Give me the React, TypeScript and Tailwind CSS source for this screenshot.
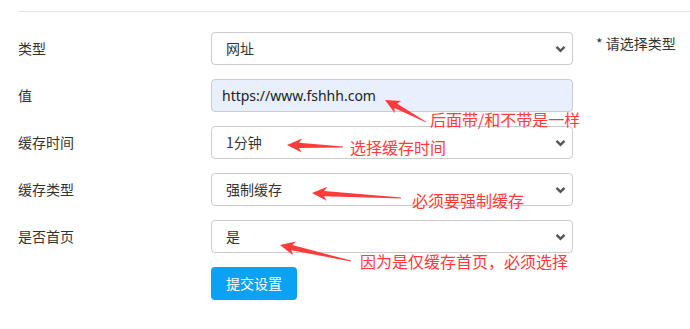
const font = "font-['Microsoft_YaHei','Noto_Sans_CJK_SC',sans-serif]";

type Arrow = { tip: [number, number]; tail: [number, number] };

const arrows: Arrow[] = [
  { tip: [385, 100], tail: [426, 122] },
  { tip: [287, 145], tail: [343, 147] },
  { tip: [312, 193], tail: [401, 198] },
  { tip: [280, 245], tail: [351, 261] },
];

function arrowPoints({ tip, tail }: Arrow) {
  const dx = tail[0] - tip[0];
  const dy = tail[1] - tip[1];
  const len = Math.hypot(dx, dy);
  const ux = dx / len;
  const uy = dy / len;
  const nx = -uy;
  const ny = ux;
  const local: [number, number][] = [
    [0, 0],
    [15, -7],
    [12, -2.6],
    [len, -0.4],
    [len, 0.4],
    [12, 2.6],
    [15, 7],
  ];
  return local
    .map(([a, b]) => `${tip[0] + ux * a + nx * b},${tip[1] + uy * a + ny * b}`)
    .join(" ");
}

function Chevron() {
  return (
    <svg width="11" height="8" viewBox="0 0 11 8" className="shrink-0">
      <path d="M1.5 1.8 L5.5 5.8 L9.5 1.8" fill="none" stroke="#555" strokeWidth="2.4" />
    </svg>
  );
}

function SelectBox({ value }: { value: string }) {
  return (
    <div className="flex h-[33px] w-[362px] items-center justify-between rounded-[4px] border border-[#cccccc] bg-white pl-[14px] pr-[6px] text-[14px] text-[#333]">
      <span>{value}</span>
      <Chevron />
    </div>
  );
}

function Row({ label, children, aside }: { label: string; children: React.ReactNode; aside?: React.ReactNode }) {
  return (
    <div className="flex items-center">
      <div className="w-[193px] text-[14px] text-[#333]">{label}</div>
      {children}
      {aside}
    </div>
  );
}

export default function App() {
  return (
    <div className={`relative h-[329px] w-[690px] overflow-hidden bg-white ${font}`}>
      <div className="ml-[18px] mt-[11px] border-t border-[#e6e6e6]" />
      <div className="flex flex-col gap-[14px] pl-[18px] pt-[20px]">
        <Row
          label="类型"
          aside={<span className="ml-[23px] -mt-[10px] text-[14px] text-[#333]">* 请选择类型</span>}
        >
          <SelectBox value="网址" />
        </Row>
        <Row label="值">
          <div className="flex h-[33px] w-[362px] items-center rounded-[4px] border border-[#cccccc] bg-[#e8f0fe] pl-[10px] font-['Noto_Sans',sans-serif] text-[14px] text-[#222]">
            https://www.fshhh.com
          </div>
        </Row>
        <Row label="缓存时间">
          <SelectBox value="1分钟" />
        </Row>
        <Row label="缓存类型">
          <SelectBox value="强制缓存" />
        </Row>
        <Row label="是否首页">
          <SelectBox value="是" />
        </Row>
        <div className="flex pl-[193px]">
          <button className="h-[33px] w-[86px] rounded-[4px] bg-[#0ba2f6] text-[14px] text-white">提交设置</button>
        </div>
      </div>

      <svg className="pointer-events-none absolute left-0 top-0" width="690" height="329">
        {arrows.map((a, i) => (
          <polygon key={i} points={arrowPoints(a)} fill="#ff3b3b" />
        ))}
      </svg>
      <span className="absolute left-[430px] top-[109px] text-[16px] leading-[20px] text-[#ff3b3b]">后面带/和不带是一样</span>
      <span className="absolute left-[350px] top-[137px] text-[16px] leading-[20px] text-[#ff3b3b]">选择缓存时间</span>
      <span className="absolute left-[412px] top-[190px] text-[16px] leading-[20px] text-[#ff3b3b]">必须要强制缓存</span>
      <span className="absolute left-[360px] top-[251px] text-[16px] leading-[20px] text-[#ff3b3b]">因为是仅缓存首页，必须选择</span>
    </div>
  );
}
